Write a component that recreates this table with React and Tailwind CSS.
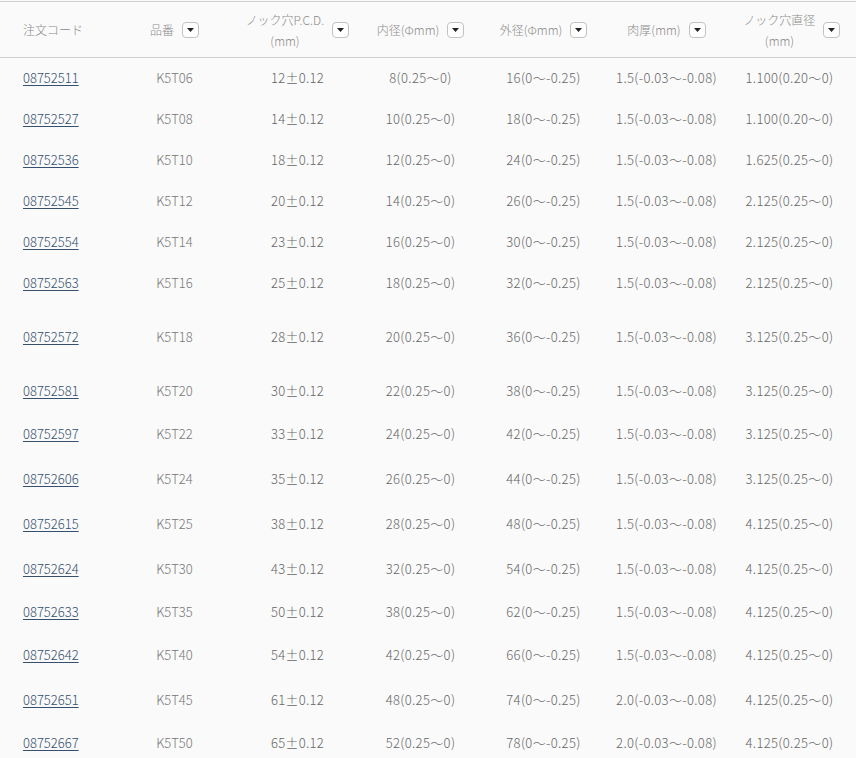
const rows = [
  ["08752511", "K5T06", "12", "8(0.25～0)", "16(0～-0.25)", "1.5(-0.03～-0.08)", "1.100(0.20～0)", 41],
  ["08752527", "K5T08", "14", "10(0.25～0)", "18(0～-0.25)", "1.5(-0.03～-0.08)", "1.100(0.20～0)", 41],
  ["08752536", "K5T10", "18", "12(0.25～0)", "24(0～-0.25)", "1.5(-0.03～-0.08)", "1.625(0.25～0)", 41],
  ["08752545", "K5T12", "20", "14(0.25～0)", "26(0～-0.25)", "1.5(-0.03～-0.08)", "2.125(0.25～0)", 41],
  ["08752554", "K5T14", "23", "16(0.25～0)", "30(0～-0.25)", "1.5(-0.03～-0.08)", "2.125(0.25～0)", 41],
  ["08752563", "K5T16", "25", "18(0.25～0)", "32(0～-0.25)", "1.5(-0.03～-0.08)", "2.125(0.25～0)", 41],
  ["08752572", "K5T18", "28", "20(0.25～0)", "36(0～-0.25)", "1.5(-0.03～-0.08)", "3.125(0.25～0)", 66],
  ["08752581", "K5T20", "30", "22(0.25～0)", "38(0～-0.25)", "1.5(-0.03～-0.08)", "3.125(0.25～0)", 42],
  ["08752597", "K5T22", "33", "24(0.25～0)", "42(0～-0.25)", "1.5(-0.03～-0.08)", "3.125(0.25～0)", 44],
  ["08752606", "K5T24", "35", "26(0.25～0)", "44(0～-0.25)", "1.5(-0.03～-0.08)", "3.125(0.25～0)", 46],
  ["08752615", "K5T25", "38", "28(0.25～0)", "48(0～-0.25)", "1.5(-0.03～-0.08)", "4.125(0.25～0)", 44],
  ["08752624", "K5T30", "43", "32(0.25～0)", "54(0～-0.25)", "1.5(-0.03～-0.08)", "4.125(0.25～0)", 46],
  ["08752633", "K5T35", "50", "38(0.25～0)", "62(0～-0.25)", "1.5(-0.03～-0.08)", "4.125(0.25～0)", 40],
  ["08752642", "K5T40", "54", "42(0.25～0)", "66(0～-0.25)", "1.5(-0.03～-0.08)", "4.125(0.25～0)", 46],
  ["08752651", "K5T45", "61", "48(0.25～0)", "74(0～-0.25)", "2.0(-0.03～-0.08)", "4.125(0.25～0)", 44],
  ["08752667", "K5T50", "65", "52(0.25～0)", "78(0～-0.25)", "2.0(-0.03～-0.08)", "4.125(0.25～0)", 42],
];

function SortBox() {
  return (
    <span className="inline-flex items-center justify-center w-[17px] h-[16px] border border-[#c2c2c2] rounded-[4px] bg-white shrink-0">
      <svg width="7" height="4" viewBox="0 0 7 4">
        <path d="M0 0h7L3.5 4z" fill="#222" />
      </svg>
    </span>
  );
}

function Head({ lines, sort = true }) {
  return (
    <div className="flex items-center justify-center gap-2">
      <div className="text-center leading-[21px]">
        {lines.map(l => (
          <div key={l}>{l}</div>
        ))}
      </div>
      {sort && <SortBox />}
    </div>
  );
}

const cols = "grid grid-cols-[113px_123px_123px_123px_123px_123px_1fr] items-center";

export default function App() {
  return (
    <div className="w-[856px] h-[758px] overflow-hidden bg-[#fafafa] text-[13px] font-light text-[#666]" style={{ fontFamily: '"Noto Sans CJK JP", "Noto Sans", sans-serif' }}>
      <div className={`${cols} mt-px h-[57px] border-y border-[#cfcfcf] text-[12px] text-[#8a8a8a]`}>
        <div className="pl-[23px]">注文コード</div>
        <Head lines={["品番"]} />
        <Head lines={["ノック穴P.C.D.", "(mm)"]} />
        <Head lines={["内径(Φmm)"]} />
        <Head lines={["外径(Φmm)"]} />
        <Head lines={["肉厚(mm)"]} />
        <Head lines={["ノック穴直径", "(mm)"]} />
      </div>
      {rows.map(r => (
        <div key={r[0]} className={cols} style={{ height: r[7] }}>
          <div className="pl-[23px] -mt-px">
            <a href="#" className="text-[#34506e] underline underline-offset-2">{r[0]}</a>
          </div>
          <div className="text-center text-[#777] -mt-px">{r[1]}</div>
          <div className="text-center tracking-[0.25px] -mt-px">{r[2]}±0.12</div>
          <div className="text-center tracking-[0.35px] -mt-px">{r[3]}</div>
          <div className="text-center tracking-[0.35px] -mt-px">{r[4]}</div>
          <div className="text-center tracking-[0.35px] -mt-px">{r[5]}</div>
          <div className="text-center tracking-[0.35px] pr-[5px] -mt-px">{r[6]}</div>
        </div>
      ))}
    </div>
  );
}
